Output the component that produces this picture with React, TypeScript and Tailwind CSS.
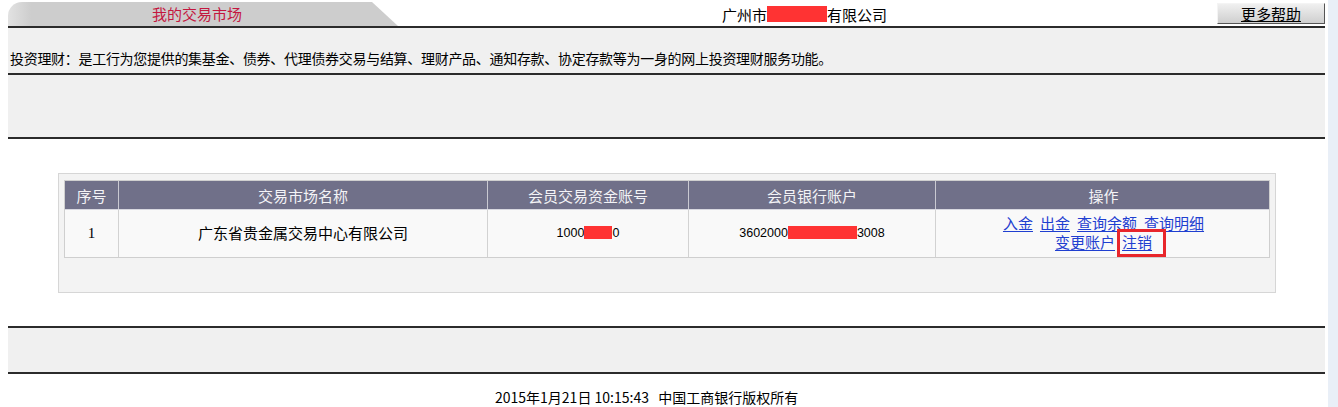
import React from "react";

const cjk = "font-['Noto_Sans_CJK_SC','Liberation_Sans',sans-serif]";
const cols = "grid grid-cols-[54px_369px_201px_247px_335px]";

function Rule() {
  return <div className="h-[2px] bg-[#2b2b2b]" />;
}

function HeadCell({ children, last }: { children: React.ReactNode; last?: boolean }) {
  return (
    <div
      className={`flex items-center justify-center text-[15px] leading-none text-[#f3f3f6] ${
        last ? "" : "border-r border-[#c9c9d2]"
      }`}
    >
      {children}
    </div>
  );
}

function BodyCell({ children, last }: { children: React.ReactNode; last?: boolean }) {
  return (
    <div
      className={`flex flex-col items-center justify-center ${
        last ? "" : "border-r border-[#d2d2d2]"
      }`}
    >
      {children}
    </div>
  );
}

function Redact({ w }: { w: number }) {
  return <span className="inline-block h-[13px] bg-[#ff3333] align-[-2px]" style={{ width: w }} />;
}

function Op({ children }: { children: React.ReactNode }) {
  return <a className="text-[#1f3fd0] underline underline-offset-2 cursor-pointer">{children}</a>;
}

export default function App() {
  return (
    <div className={`flex h-[407px] w-[1338px] overflow-hidden bg-white ${cjk} text-black`}>
      <div className="flex-1 pl-2 pr-[3px]">
        {/* top bar */}
        <div className="flex h-[26px] items-end">
          <div className="flex h-[24px] w-[390px] items-center justify-center rounded-tl-[14px] bg-gradient-to-r from-[#e2e2e2] via-[#cdcdcd] via-[6%] to-[#cdcdcd] pr-[12px] text-[15px] text-[#c4173f] [clip-path:polygon(0_0,364px_0,100%_100%,0_100%)]">
            我的交易市场
          </div>
          <div className="ml-[324px] flex h-[24px] items-center text-[15px] leading-none">
            广州市
            <span className="inline-block h-[16px] w-[60px] bg-[#ff3333]" />
            有限公司
          </div>
          <div className="ml-auto mb-[2px] flex h-[21px] w-[108px] items-center justify-center border border-t-[#f4f4f4] border-l-[#f4f4f4] border-r-[#555] border-b-[#555] bg-gradient-to-b from-[#f0f0f0] to-[#cfcfcf] text-[15px] leading-none">
            <span className="underline decoration-1 underline-offset-1">更多帮助</span>
          </div>
        </div>
        <Rule />

        {/* intro */}
        <div className="bg-[#f0f0f0]">
          <div className="flex h-[45px] items-end pb-[8px] pl-[2px] text-[14px] leading-none tracking-[-0.3px]">
            投资理财：是工行为您提供的集基金、债券、代理债券交易与结算、理财产品、通知存款、协定存款等为一身的网上投资理财服务功能。
          </div>
          <Rule />
          <div className="h-[62px]" />
          <Rule />
        </div>

        {/* market list */}
        <div className="h-[34px]" />
        <div className="ml-[50px] h-[120px] w-[1218px] border border-[#d6d6d6] bg-[#f3f3f3] px-[5px] pt-[6px]">
          <div className="border border-[#cfcfcf]">
            <div className={`${cols} h-[29px] border-b border-[#d8d8e0] bg-[#707089]`}>
              <HeadCell>序号</HeadCell>
              <HeadCell>交易市场名称</HeadCell>
              <HeadCell>会员交易资金账号</HeadCell>
              <HeadCell>会员银行账户</HeadCell>
              <HeadCell last>操作</HeadCell>
            </div>
            <div className={`${cols} h-[47px] bg-[#f9f9f9]`}>
              <BodyCell>
                <span className="font-['Liberation_Serif',serif] text-[15px]">1</span>
              </BodyCell>
              <BodyCell>
                <span className="text-[15px]">广东省贵金属交易中心有限公司</span>
              </BodyCell>
              <BodyCell>
                <span className="font-['Liberation_Sans',sans-serif] text-[12.5px]">
                  1000
                  <Redact w={28} />0
                </span>
              </BodyCell>
              <BodyCell>
                <span className="font-['Liberation_Sans',sans-serif] text-[12.5px]">
                  3602000
                  <Redact w={69} />
                  3008
                </span>
              </BodyCell>
              <BodyCell last>
                <div className="flex gap-[7px] text-[15px] leading-[19px]">
                  <Op>入金</Op>
                  <Op>出金</Op>
                  <Op>查询余额</Op>
                  <Op>查询明细</Op>
                </div>
                <div className="flex gap-[7px] pb-[3px] text-[15px] leading-[19px]">
                  <Op>变更账户</Op>
                  <span className="relative">
                    <Op>注销</Op>
                    <span className="absolute -left-[5px] -right-[14px] -top-[3px] -bottom-[6px] border-[3px] border-[#e8262b]" />
                  </span>
                </div>
              </BodyCell>
            </div>
          </div>
        </div>

        {/* bottom band */}
        <div className="h-[33px]" />
        <Rule />
        <div className="h-[44px] bg-[#f0f0f0]" />
        <Rule />
        <div className="pt-[16px] pl-[487px] text-[14px] leading-none">2015年1月21日 10:15:43 &nbsp; 中国工商银行版权所有</div>
      </div>
      <div className="w-[10px] bg-[#e9eff7]" />
    </div>
  );
}
